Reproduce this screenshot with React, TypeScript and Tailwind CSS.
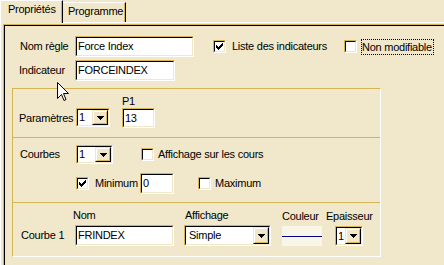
import React from "react";

type P = { className?: string; children?: React.ReactNode };

function Sunken({ className = "", children }: P) {
  return (
    <div className={"border border-t-[#d4b454] border-l-[#d4b454] border-b-white border-r-white " + className}>
      <div className="h-full w-full border border-t-black border-l-black border-b-[#f1e8cb] border-r-[#f1e8cb] bg-white flex items-center overflow-hidden">
        {children}
      </div>
    </div>
  );
}

function Arrow() {
  return (
    <svg width="7" height="4" viewBox="0 0 7 4" shapeRendering="crispEdges">
      <path d="M0 0h7v1H0z M1 1h5v1H1z M2 2h3v1H2z M3 3h1v1H3z" fill="#000" />
    </svg>
  );
}

function DropButton() {
  return (
    <div className="h-full w-[16px] shrink-0 border border-t-[#f1e8cb] border-l-[#f1e8cb] border-b-black border-r-black">
      <div className="h-full w-full border border-t-white border-l-white border-b-[#d4b454] border-r-[#d4b454] bg-[#f1e8cb] flex items-center justify-center">
        <Arrow />
      </div>
    </div>
  );
}

function Check({ checked = false }: { checked?: boolean }) {
  return (
    <Sunken className="w-[13px] h-[13px] shrink-0">
      {checked && (
        <svg width="9" height="9" viewBox="0 0 9 9" shapeRendering="crispEdges" className="block">
          <path
            d="M1 3h1v3H1z M2 4h1v3H2z M3 5h1v3H3z M4 4h1v3H4z M5 3h1v3H5z M6 2h1v3H6z M7 1h1v3H7z"
            fill="#000"
          />
        </svg>
      )}
    </Sunken>
  );
}

function Cursor() {
  return (
    <svg width="13" height="20" viewBox="0 0 13 20" className="absolute left-[57px] top-[82px]" shapeRendering="crispEdges">
      <path
        d="M0.5 0.5 L0.5 16.5 L4.5 12.5 L7 18.5 L9 17.5 L6.5 11.5 L11.5 11.5 Z"
        fill="#fff"
        stroke="#000"
        strokeWidth="1"
        shapeRendering="auto"
      />
    </svg>
  );
}

export default function App() {
  return (
    <div className="relative w-[444px] h-[265px] overflow-hidden bg-[#f1e8cb] text-black text-[11px] leading-[13px] tracking-[-0.25px] font-['Liberation_Sans',Arial,sans-serif]">
      {/* Tabs */}
      <div className="flex items-start h-[22px]">
        <div className="relative z-10 w-[63px] h-[23px] border-t border-l border-r border-t-white border-l-white border-r-black bg-[#f1e8cb]">
          <div className="h-full border-r border-r-[#d4b454] pl-[7px] pt-[2px]">Propriétés</div>
        </div>
        <div className="mt-[2px] w-[63px] h-[20px] border-t border-r border-t-white border-r-black">
          <div className="h-full border-r border-r-[#d4b454] pl-[5px] pt-[2px]">Programme</div>
        </div>
      </div>

      {/* Panel */}
      <div className="border-t border-l border-t-white border-l-white pt-[1px] pl-[2px] h-[243px]">
        <div className="h-full border-t border-l border-t-[#d4b454] border-l-[#d4b454]">
          <div className="h-full border-t border-l border-t-black border-l-black pt-[10px]">
            {/* Row 1 */}
            <div className="flex items-center h-[21px]">
              <div className="w-[70px] pl-[15px]">Nom règle</div>
              <Sunken className="w-[119px] h-[21px]">
                <span className="pl-[1px]">Force Index</span>
              </Sunken>
              <div className="ml-[19px] w-[131px] flex items-center">
                <Check checked />
                <span className="ml-[6px]">Liste des indicateurs</span>
              </div>
              <div className="flex items-center">
                <Check />
                <span className="ml-[4px] border border-dotted border-black pr-[1px] leading-[14px]">Non modifiable</span>
              </div>
            </div>

            {/* Row 2 */}
            <div className="mt-[3px] flex items-center h-[21px]">
              <div className="w-[70px] pl-[14px]">Indicateur</div>
              <Sunken className="w-[100px] h-[21px]">
                <span className="pl-[1px]">FORCEINDEX</span>
              </Sunken>
            </div>

            {/* Group box */}
            <div className="mt-[7px] ml-[7px] w-[369px] h-[169px] border border-t-[#d4b454] border-l-[#d4b454] border-b-white border-r-white flex flex-col">
              {/* Section 1 */}
              <div className="h-[48px] pt-[6px] pb-[9px] flex items-end">
                <div className="w-[63px] pl-[6px] h-[19px] flex items-center">Paramètres</div>
                <Sunken className="w-[34px] h-[19px] mb-[1px]">
                  <span className="flex-1 pl-[1px]">1</span>
                  <DropButton />
                </Sunken>
                <div className="ml-[12px] flex flex-col">
                  <div className="h-[13px]">P1</div>
                  <Sunken className="w-[33px] h-[20px]">
                    <span className="pl-[1px]">13</span>
                  </Sunken>
                </div>
              </div>
              <div className="h-px bg-[#d4b454]" />

              {/* Section 2 */}
              <div className="h-[64px] pt-[7px] flex flex-col">
                <div className="flex items-center h-[19px]">
                  <div className="w-[63px] pl-[7px]">Courbes</div>
                  <Sunken className="w-[37px] h-[19px]">
                    <span className="flex-1 pl-[1px]">1</span>
                    <DropButton />
                  </Sunken>
                  <div className="ml-[28px] flex items-center">
                    <Check />
                    <span className="ml-[4px]">Affichage sur les cours</span>
                  </div>
                </div>
                <div className="mt-[9px] flex items-center h-[21px]">
                  <div className="w-[63px]" />
                  <Check checked />
                  <span className="ml-[6px] w-[45px]">Minimum</span>
                  <Sunken className="w-[34px] h-[21px]">
                    <span className="pl-[1px]">0</span>
                  </Sunken>
                  <div className="ml-[24px] flex items-center">
                    <Check />
                    <span className="ml-[4px]">Maximum</span>
                  </div>
                </div>
              </div>
              <div className="h-px bg-[#d4b454]" />

              {/* Section 3 */}
              <div className="h-[53px] pt-[6px] pb-[10px] flex items-end">
                <div className="w-[62px] pl-[8px] h-[21px] flex items-center">Courbe 1</div>
                <div className="flex flex-col">
                  <div className="h-[13px] mb-[3px] ml-[-2px]">Nom</div>
                  <Sunken className="w-[99px] h-[21px]">
                    <span className="pl-[1px]">FRINDEX</span>
                  </Sunken>
                </div>
                <div className="ml-[10px] flex flex-col">
                  <div className="h-[13px] mb-[3px] pl-[1px]">Affichage</div>
                  <Sunken className="w-[87px] h-[21px]">
                    <span className="flex-1 pl-[3px]">Simple</span>
                    <DropButton />
                  </Sunken>
                </div>
                <div className="ml-[11px] flex flex-col">
                  <div className="h-[13px] mb-[3px]">Couleur</div>
                  <div className="w-[40px] h-[20px] bg-[#f8f6e9] flex flex-col justify-center">
                    <div className="h-px bg-[#000080]" />
                  </div>
                </div>
                <div className="ml-[4px] flex flex-col">
                  <div className="h-[13px] mb-[3px]">Epaisseur</div>
                  <Sunken className="ml-[9px] w-[28px] h-[20px]">
                    <span className="flex-1 pl-[1px]">1</span>
                    <DropButton />
                  </Sunken>
                </div>
              </div>
            </div>
          </div>
        </div>
      </div>

      <Cursor />
    </div>
  );
}
